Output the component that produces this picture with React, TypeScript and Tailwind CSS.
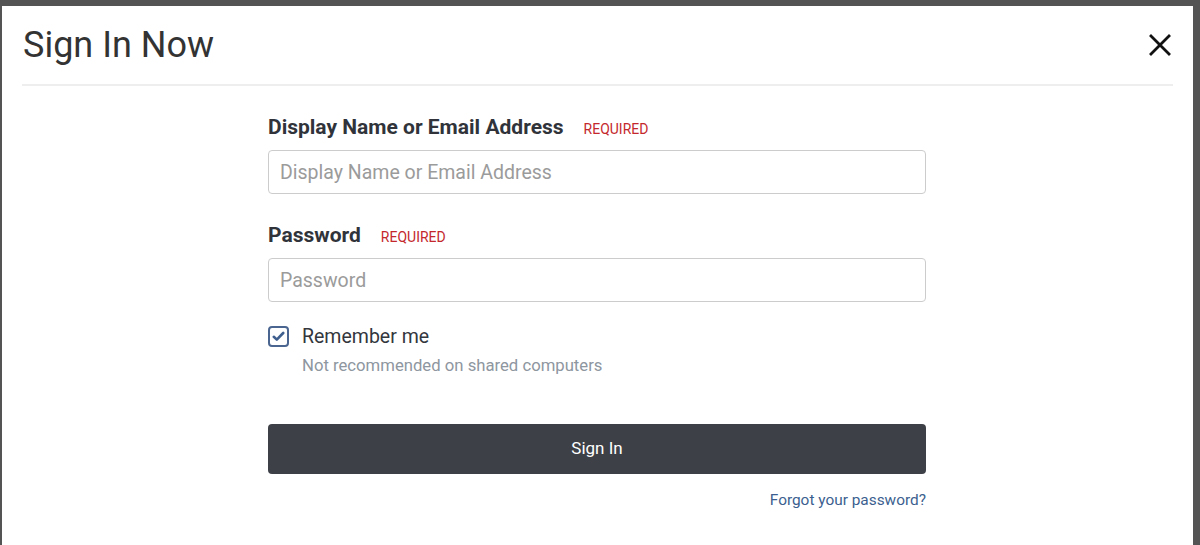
import React from "react";

export default function App() {
  return (
    <div
      className="h-[545px] w-[1200px] overflow-hidden bg-[#545454] pt-[6px] pl-[2px] pr-[7px] flex"
      style={{ fontFamily: "Roboto, 'Liberation Sans', sans-serif" }}
    >
      <div className="flex-1 bg-white flex flex-col">
        <div className="flex items-center justify-between pl-[21px] pr-[20px] h-[78px]">
          <h1 className="text-[36px] font-normal text-[#333] leading-none">Sign In Now</h1>
          <button className="w-[26px] h-[26px] flex items-center justify-center" aria-label="Close">
            <svg width="22" height="22" viewBox="0 0 22 22" fill="none" stroke="#111" strokeWidth="2.8" strokeLinecap="square">
              <path d="M2 2 L20 20 M20 2 L2 20" />
            </svg>
          </button>
        </div>
        <div className="mx-[20px] h-[2px] bg-[#eeeeee]" />
        <div className="flex pl-[266px]">
          <form className="w-[658px] flex flex-col pt-[27px]">
            <div className="flex items-baseline gap-[20px]">
              <label className="text-[21px] font-bold text-[#30343a] leading-[28px]">Display Name or Email Address</label>
              <span className="text-[14px] text-[#c4282d] uppercase">Required</span>
            </div>
            <input
              className="mt-[9px] h-[44px] border border-[#cccccc] rounded-[4px] px-[11px] text-[19.5px] text-[#333] placeholder:text-[#9b9b9b] outline-none"
              placeholder="Display Name or Email Address"
            />
            <div className="flex items-baseline gap-[20px] mt-[27px]">
              <label className="text-[21px] font-bold text-[#30343a] leading-[28px]">Password</label>
              <span className="text-[14px] text-[#c4282d] uppercase">Required</span>
            </div>
            <input
              type="password"
              className="mt-[9px] h-[44px] border border-[#cccccc] rounded-[4px] px-[11px] text-[19.5px] text-[#333] placeholder:text-[#9b9b9b] outline-none"
              placeholder="Password"
            />
            <div className="flex items-start gap-[13px] mt-[22px]">
              <div className="mt-[2px] w-[21px] h-[21px] border-2 border-[#4a6690] rounded-[4px] flex items-center justify-center">
                <svg width="13" height="11" viewBox="0 0 13 11" fill="none" stroke="#3f5f8e" strokeWidth="2.6" strokeLinecap="round" strokeLinejoin="round">
                  <path d="M1.8 5.8 L4.8 8.6 L11.2 2" />
                </svg>
              </div>
              <div className="flex flex-col">
                <span className="text-[19.5px] text-[#33373d] leading-[26px]">Remember me</span>
                <span className="text-[16.7px] text-[#8e96a0] leading-[20px] mt-[6px]">Not recommended on shared computers</span>
              </div>
            </div>
            <button
              type="button"
              className="mt-[48px] h-[50px] bg-[#3e4047] rounded-[4px] text-white text-[17px]"
            >
              Sign In
            </button>
            <div className="flex justify-end mt-[15px]">
              <a className="text-[15.4px] text-[#3c5f90]">Forgot your password?</a>
            </div>
          </form>
        </div>
      </div>
    </div>
  );
}
